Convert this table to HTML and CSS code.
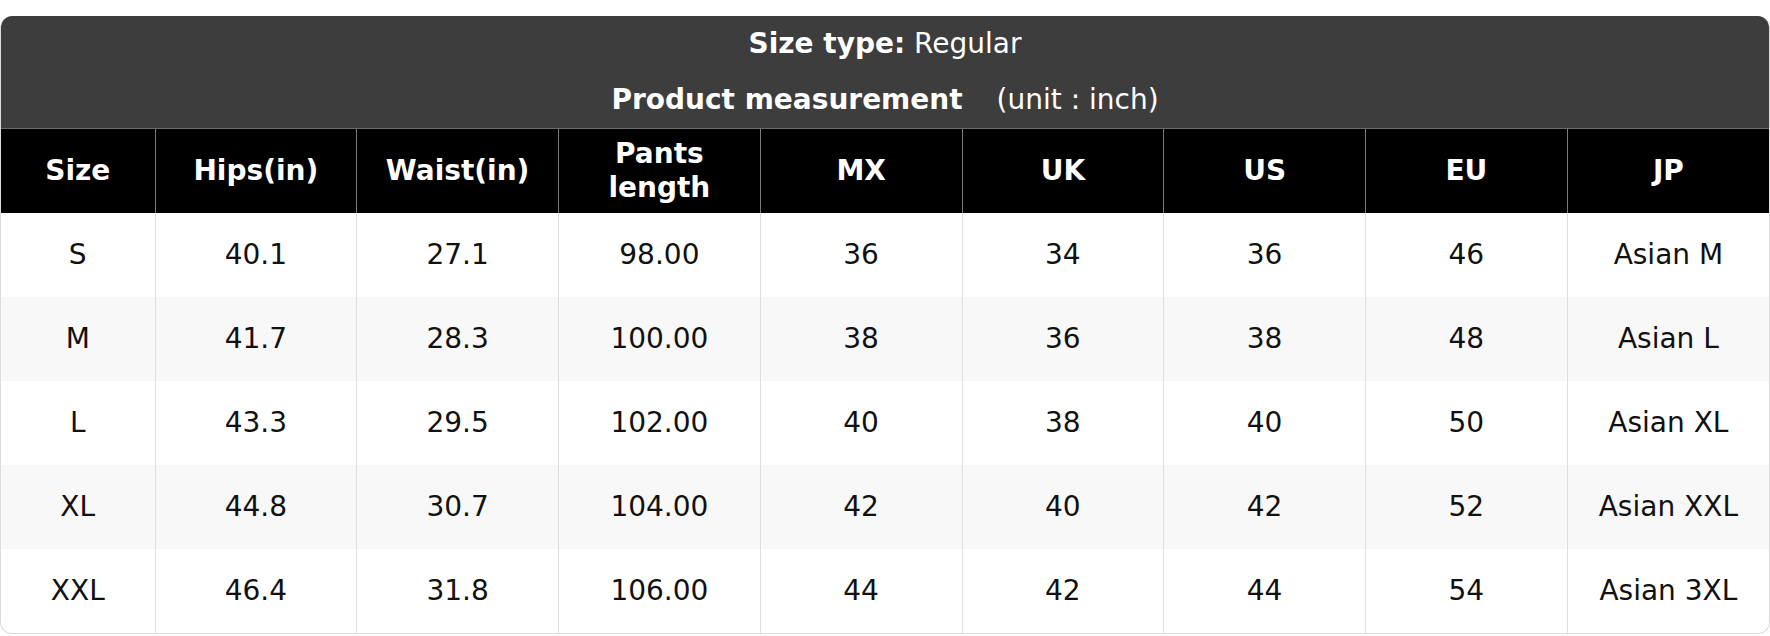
FILE: index.html
```html
<!DOCTYPE html>
<html>
<head>
<meta charset="utf-8">
<link rel="stylesheet" href="styles.css">
</head>
<body>
<div class="page">
  <div class="card">
    <div class="head">
      <div class="line"><b>Size type:</b> Regular</div>
      <div class="line"><b>Product measurement</b><span class="unit">(unit : inch)</span></div>
    </div>
    <table class="chart">
      <colgroup>
        <col class="c-first"><col><col><col><col><col><col><col><col>
      </colgroup>
      <thead>
        <tr><th>Size</th><th>Hips(in)</th><th>Waist(in)</th><th>Pants<br>length</th><th>MX</th><th>UK</th><th>US</th><th>EU</th><th>JP</th></tr>
      </thead>
      <tbody>
        <tr><td>S</td><td>40.1</td><td>27.1</td><td>98.00</td><td>36</td><td>34</td><td>36</td><td>46</td><td>Asian M</td></tr>
        <tr><td>M</td><td>41.7</td><td>28.3</td><td>100.00</td><td>38</td><td>36</td><td>38</td><td>48</td><td>Asian L</td></tr>
        <tr><td>L</td><td>43.3</td><td>29.5</td><td>102.00</td><td>40</td><td>38</td><td>40</td><td>50</td><td>Asian XL</td></tr>
        <tr><td>XL</td><td>44.8</td><td>30.7</td><td>104.00</td><td>42</td><td>40</td><td>42</td><td>52</td><td>Asian XXL</td></tr>
        <tr><td>XXL</td><td>46.4</td><td>31.8</td><td>106.00</td><td>44</td><td>42</td><td>44</td><td>54</td><td>Asian 3XL</td></tr>
      </tbody>
    </table>
  </div>
</div>
</body>
</html>
```
FILE: styles.css
```css
html, body {
  margin: 0;
  padding: 0;
  background: #ffffff;
}
body {
  font-family: "DejaVu Sans", Verdana, sans-serif;
  font-size: 28px;
  color: #111111;
}
.page {
  padding-top: 16px;
}
.card {
  border: 1px solid #dcdcdc;
  border-top: none;
  border-radius: 12px;
  overflow: hidden;
  background: #ffffff;
}
.head {
  background: #3d3d3d;
  color: #ffffff;
  text-align: center;
}
.line {
  padding: 11px 0 12px;
  line-height: 33px;
}
.line b {
  font-weight: bold;
}
.unit {
  margin-left: 34px;
}
.chart {
  width: 100%;
  border-collapse: collapse;
  table-layout: fixed;
}
.c-first {
  width: 154px;
}
.chart th {
  background: #000000;
  color: #ffffff;
  font-weight: bold;
  line-height: 34px;
  padding: 8px 6px;
  border-top: 1px solid #6a6a6a;
  border-left: 1px solid #7a7a7a;
  text-align: center;
}
.chart th:first-child {
  border-left: none;
}
.chart td {
  line-height: 34px;
  padding: 25px 6px;
  text-align: center;
  border-left: 1px solid #dedede;
}
.chart td:first-child {
  border-left: none;
}
.chart tbody tr:nth-child(even) td {
  background: #f8f8f8;
}
```
